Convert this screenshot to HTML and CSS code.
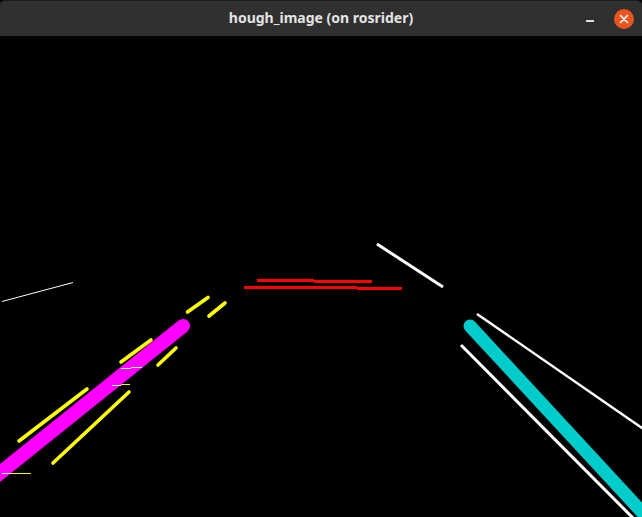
FILE: index.html
```html
<!DOCTYPE html>
<html>
<head>
<meta charset="utf-8">
<link rel="stylesheet" href="styles.css">
</head>
<body>
<div class="window">
  <header class="titlebar">
    <div class="spacer"></div>
    <div class="title">hough_image (on rosrider)</div>
    <div class="controls">
      <span class="min-btn"></span>
      <span class="close-btn">
        <svg width="20" height="20" viewBox="0 0 20 20"><path d="M6.5 6.5 L13.5 13.5 M13.5 6.5 L6.5 13.5" stroke="#fff" stroke-width="1.6" stroke-linecap="round"/></svg>
      </span>
    </div>
  </header>
  <svg class="canvas" width="642" height="481" viewBox="0 36 642 481">
    <rect x="0" y="36" width="642" height="481" fill="#000"/>
    <g stroke="#fff" fill="none">
      <line x1="2" y1="301.5" x2="73" y2="282.5" stroke-width="1"/>
      <line x1="377" y1="244" x2="443" y2="287" stroke-width="3"/>
      <line x1="477" y1="314" x2="645" y2="430" stroke-width="2.4"/>
      <line x1="461" y1="345" x2="634" y2="519" stroke-width="3"/>
    </g>
    <g stroke="#ff0000" stroke-width="3" fill="none">
      <line x1="257" y1="280.5" x2="314" y2="280.5"/>
      <line x1="314" y1="281.5" x2="372" y2="281.5"/>
      <line x1="244" y1="287.5" x2="357" y2="287.5"/>
      <line x1="357" y1="288.5" x2="402" y2="288.5"/>
    </g>
    <line x1="-20" y1="489" x2="183" y2="326" stroke="#ff00ff" stroke-width="14" stroke-linecap="round"/>
    <line x1="470" y1="326" x2="665" y2="537" stroke="#00cccc" stroke-width="13" stroke-linecap="round"/>
    <g stroke="#ffff00" stroke-width="3.6" stroke-linecap="round" fill="none">
      <line x1="187.5" y1="312" x2="208" y2="297.5"/>
      <line x1="209" y1="316" x2="225" y2="303"/>
      <line x1="121" y1="362" x2="151" y2="340"/>
      <line x1="158" y1="365" x2="176" y2="348"/>
      <line x1="19" y1="441" x2="87" y2="389"/>
      <line x1="53" y1="463" x2="129" y2="392"/>
    </g>
    <g stroke-width="1" fill="none">
      <line x1="121" y1="368.5" x2="131" y2="368.5" stroke="#fff"/>
      <line x1="131" y1="367.5" x2="142" y2="367.5" stroke="#fff"/>
      <line x1="112" y1="385.5" x2="121" y2="385.5" stroke="#fff"/>
      <line x1="121" y1="384.5" x2="130" y2="384.5" stroke="#ffff00"/>
      <line x1="2" y1="473.5" x2="11" y2="473.5" stroke="#fff"/>
      <line x1="11" y1="473.5" x2="31" y2="473.5" stroke="#ffff00"/>
    </g>
  </svg>
</div>
</body>
</html>
```

FILE: styles.css
```css
html, body {
  margin: 0;
  padding: 0;
  background: #000;
  width: 642px;
  height: 517px;
  overflow: hidden;
}

.window {
  width: 642px;
  height: 517px;
  display: flex;
  flex-direction: column;
  background: #000;
  border-left: 2px solid #0c0c0c;
  box-sizing: border-box;
}

.titlebar {
  height: 36px;
  flex: 0 0 36px;
  display: grid;
  grid-template-columns: 1fr auto 1fr;
  align-items: center;
  background: #303030;
  border-top: 1px solid #1c1c1c;
  border-radius: 5px 5px 0 0;
  box-sizing: border-box;
  margin-left: -2px;
}

.title {
  font-family: "Noto Sans", "DejaVu Sans", sans-serif;
  font-weight: 700;
  font-size: 14px;
  color: #e4e4e4;
  line-height: 1;
  padding-bottom: 1px;
}

.controls {
  display: flex;
  justify-content: flex-end;
  align-items: center;
  gap: 20px;
  padding-right: 8px;
}

.min-btn {
  display: block;
  width: 8px;
  height: 2px;
  background: #e0e0e0;
  margin-top: 4px;
}

.close-btn {
  display: block;
  width: 20px;
  height: 20px;
  border-radius: 50%;
  background: #e95420;
  margin-top: 1px;
}

.close-btn svg {
  display: block;
}

.canvas {
  display: block;
  margin-left: -2px;
}
```
